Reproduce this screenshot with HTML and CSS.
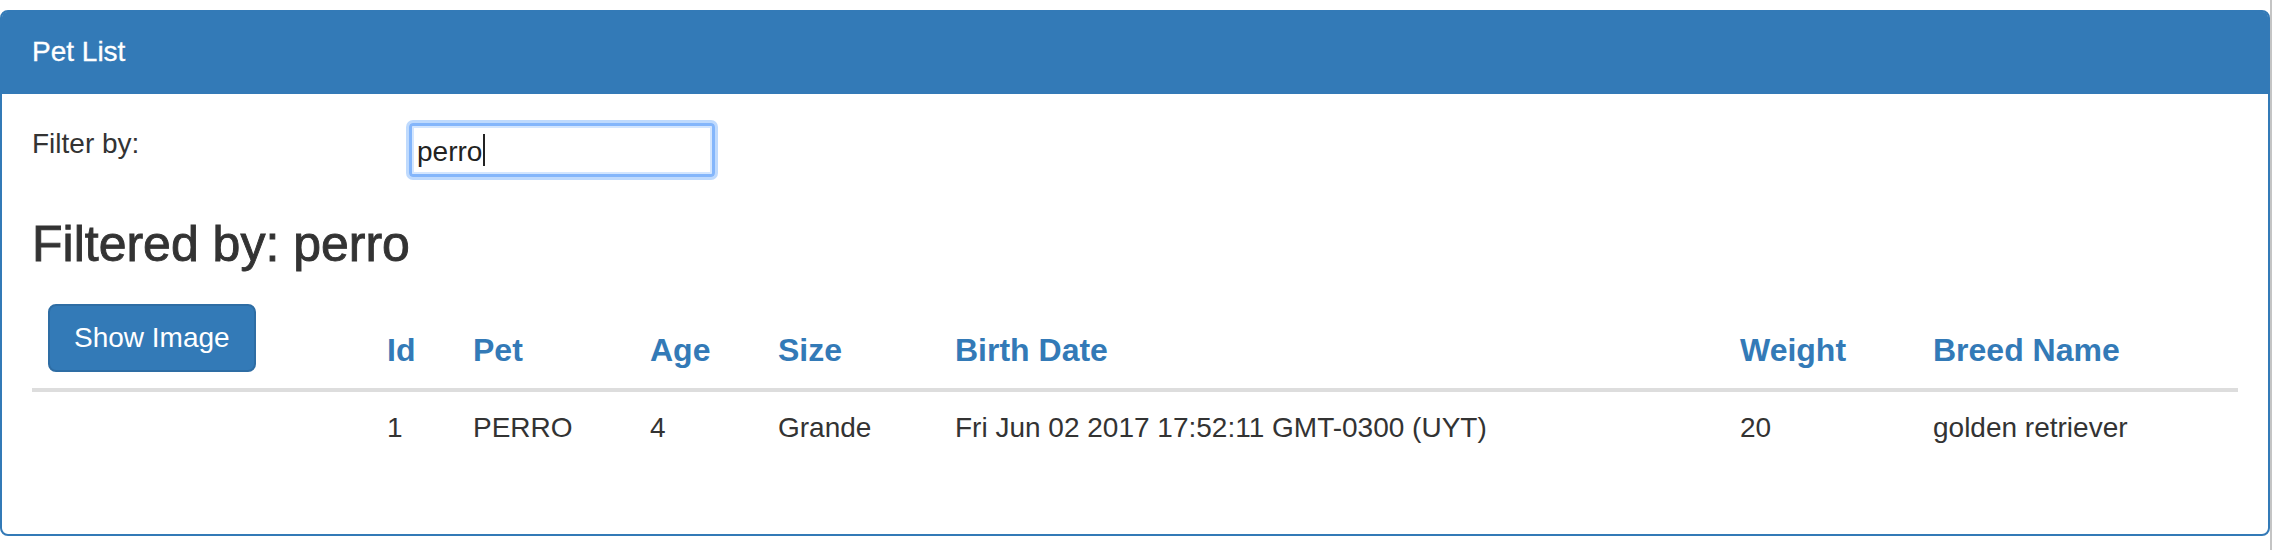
FILE: index.html
```html
<!DOCTYPE html>
<html lang="en">
<head>
<meta charset="utf-8">
<title>Pet List</title>
<link rel="stylesheet" href="styles.css">
</head>
<body>
<div class="page">
  <div class="panel">
    <div class="panel-heading">Pet List</div>
    <div class="panel-body">
      <div class="filter-row">
        <div class="filter-label">Filter by:</div>
        <div class="input"><span class="input-text">perro</span><span class="caret"></span></div>
      </div>
      <h3 class="filtered">Filtered by: perro</h3>
      <table class="pets">
        <colgroup>
          <col class="c-img"><col class="c-id"><col class="c-pet"><col class="c-age"><col class="c-size"><col class="c-birth"><col class="c-weight"><col class="c-breed">
        </colgroup>
        <thead>
          <tr>
            <th><button class="btn">Show Image</button></th>
            <th>Id</th>
            <th>Pet</th>
            <th>Age</th>
            <th>Size</th>
            <th>Birth Date</th>
            <th>Weight</th>
            <th>Breed Name</th>
          </tr>
        </thead>
        <tbody>
          <tr>
            <td></td>
            <td>1</td>
            <td>PERRO</td>
            <td>4</td>
            <td>Grande</td>
            <td>Fri Jun 02 2017 17:52:11 GMT-0300 (UYT)</td>
            <td>20</td>
            <td>golden retriever</td>
          </tr>
        </tbody>
      </table>
    </div>
  </div>
  <div class="edge"></div>
</div>
</body>
</html>
```
FILE: styles.css
```css
html, body {
  margin: 0;
  padding: 0;
  background: #fff;
}
body {
  font-family: "Liberation Sans", Arial, sans-serif;
  font-size: 28px;
  line-height: 40px;
  color: #333;
  height: 550px;
  overflow: hidden;
}
.page {
  display: flex;
  height: 550px;
}
.panel {
  width: 2270px;
  box-sizing: border-box;
  margin-top: 10px;
  align-self: flex-start;
  border: 2px solid #337ab7;
  border-radius: 8px;
  background: #fff;
}
.edge {
  width: 2px;
  background: #c4c4c4;
}
.panel-heading {
  background: #337ab7;
  color: #fff;
  padding: 20px 30px 22px;
  line-height: 40px;
  font-size: 28px;
  border-radius: 5px 5px 0 0;
  -webkit-text-stroke: 0.3px #fff;
}
.panel-body {
  padding: 30px;
}
.filter-row {
  display: flex;
  align-items: flex-start;
}
.filter-label {
  width: 377px;
  flex: none;
}
.input {
  margin-top: -1px;
  width: 306px;
  height: 54px;
  box-sizing: border-box;
  border: 3px solid #84b6fb;
  border-radius: 4px;
  box-shadow: 0 0 0 3px #bfdafd, inset 0 0 0 2px #d4e6fe;
  padding: 6px 5px 0;
  display: flex;
  align-items: flex-start;
  color: #222;
}
.input-text {
  line-height: 40px;
}
.caret {
  width: 2px;
  height: 32px;
  background: #222;
  margin-left: 1px;
  margin-top: 2px;
}
.filtered {
  margin: 42px 0 19px;
  font-size: 50px;
  line-height: 50px;
  font-weight: normal;
  color: #333;
  -webkit-text-stroke: 0.9px #333;
}
.pets {
  width: 100%;
  table-layout: fixed;
  border-collapse: separate;
  border-spacing: 0;
  margin-bottom: 40px;
}
.c-img { width: 339px; }
.c-id { width: 86px; }
.c-pet { width: 177px; }
.c-age { width: 128px; }
.c-size { width: 177px; }
.c-birth { width: 785px; }
.c-weight { width: 193px; }
.c-breed { width: 321px; }
.pets th {
  text-align: left;
  vertical-align: bottom;
  padding: 16px;
  font-size: 32px;
  line-height: 41.6px;
  font-weight: bold;
  color: #337ab7;
  border-bottom: 4px solid #ddd;
  white-space: nowrap;
}
.pets td {
  padding: 16px;
  vertical-align: top;
  line-height: 40px;
  white-space: nowrap;
}
.btn {
  display: block;
  font-family: "Liberation Sans", Arial, sans-serif;
  font-size: 28px;
  line-height: 40px;
  font-weight: normal;
  color: #fff;
  background: #337ab7;
  border: 2px solid #2e6da4;
  border-radius: 8px;
  padding: 12px 24px;
  margin: 0;
}
```
